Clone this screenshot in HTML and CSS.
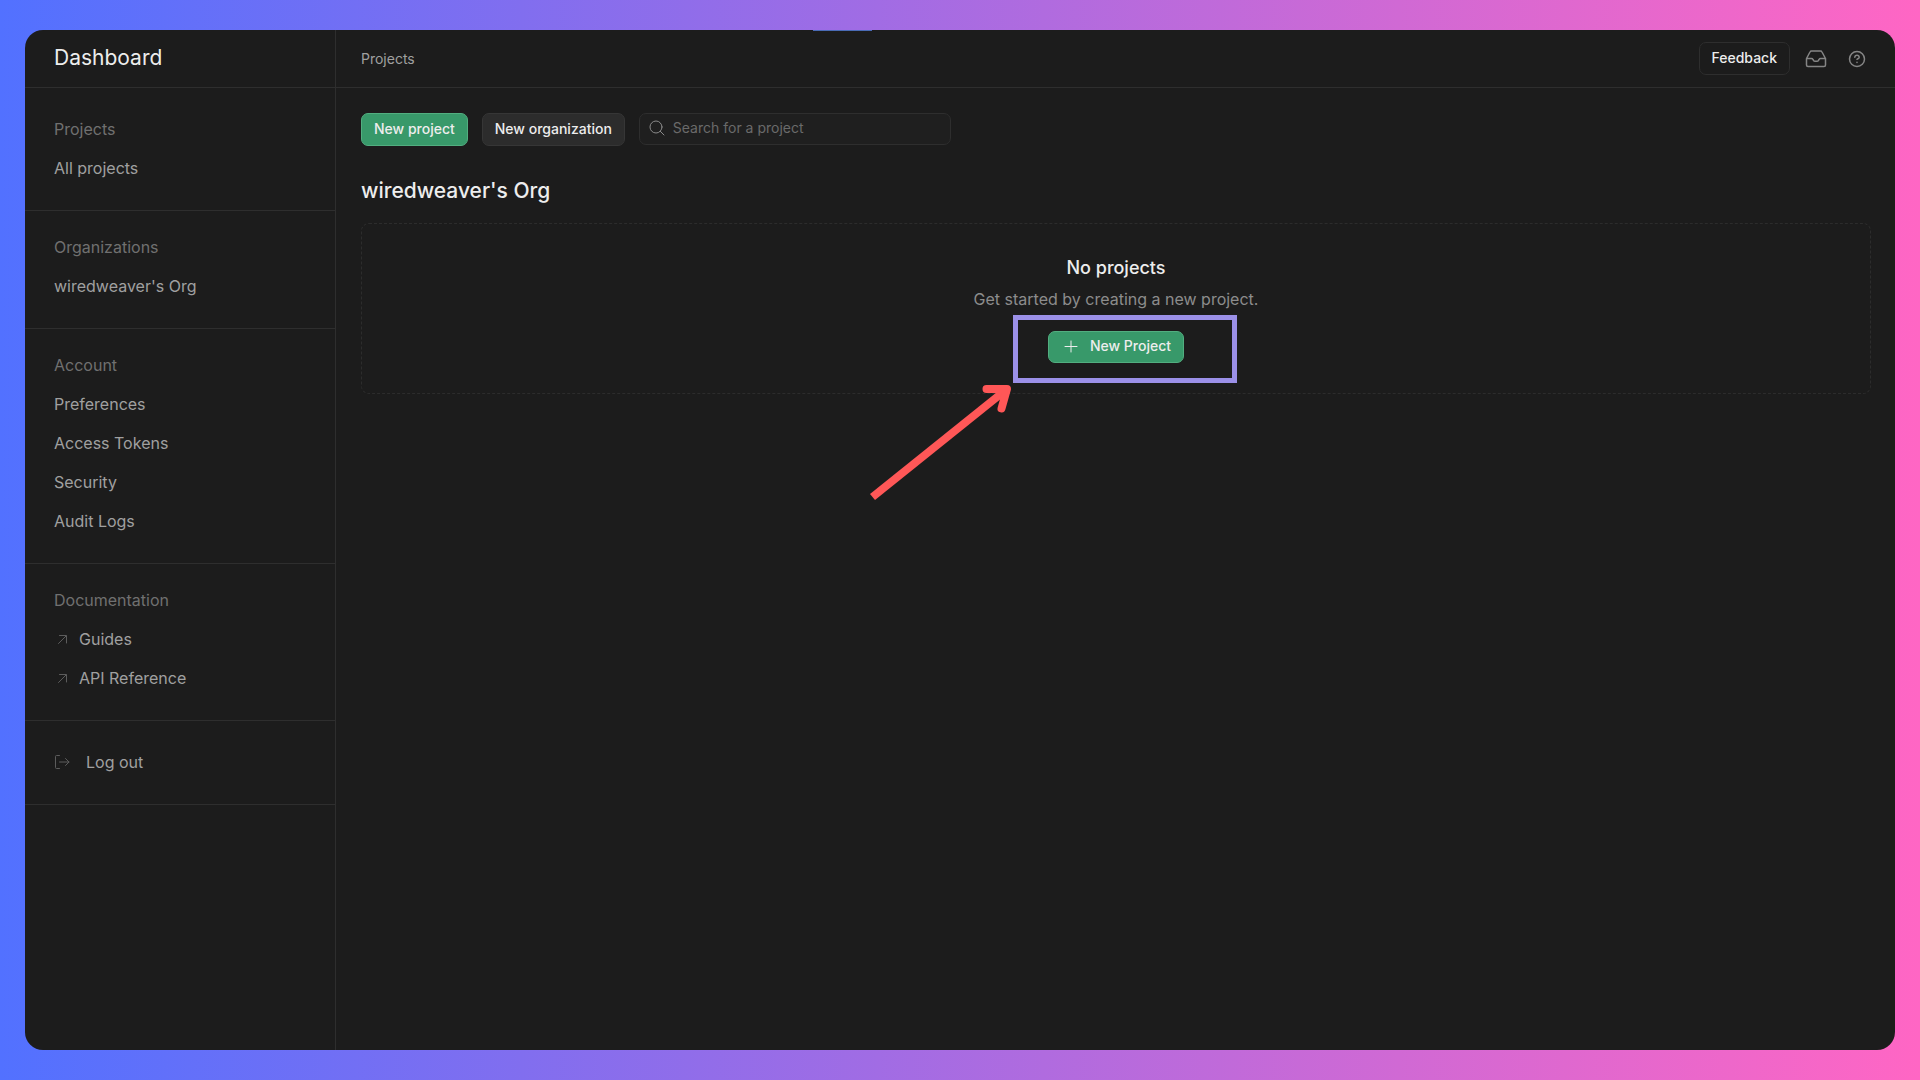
FILE: index.html
```html
<!DOCTYPE html>
<html lang="en">
<head>
<meta charset="utf-8">
<meta name="viewport" content="width=device-width, initial-scale=1">
<title>Projects | Dashboard</title>
<link rel="stylesheet" href="styles.css">
</head>
<body>
<div class="window">
  <div class="tab-accent"></div>
  <aside class="sidebar">
    <header class="bar sidebar-head"><h1 class="brand">Dashboard</h1></header>
    <nav class="nav" aria-label="Main">
      <section class="group">
        <h2 class="row group-title">Projects</h2>
        <a class="row" href="#">All projects</a>
      </section>
      <section class="group">
        <h2 class="row group-title">Organizations</h2>
        <a class="row" href="#">wiredweaver's Org</a>
      </section>
      <section class="group">
        <h2 class="row group-title">Account</h2>
        <a class="row" href="#">Preferences</a>
        <a class="row" href="#">Access Tokens</a>
        <a class="row" href="#">Security</a>
        <a class="row" href="#">Audit Logs</a>
      </section>
      <section class="group">
        <h2 class="row group-title">Documentation</h2>
        <a class="row" href="#"><svg class="icon" width="17" height="17" viewBox="0 0 17 17"><path d="M4.500 13.500 12 6M5.500 5.500H12.500V13"/></svg>Guides</a>
        <a class="row" href="#"><svg class="icon" width="17" height="17" viewBox="0 0 17 17"><path d="M4.500 13.500 12 6M5.500 5.500H12.500V13"/></svg>API Reference</a>
      </section>
      <section class="group group-exit">
        <button class="row row-exit" type="button"><svg class="icon" width="17" height="17" viewBox="0 0 17 17"><path d="M5.500 2.500H2.500Q1.500 2.500 1.500 3.500V14.500Q1.500 15.500 2.500 15.500H5.500M5.500 9H15M11.500 5.500 15 9 11.500 12.500"/></svg>Log out</button>
      </section>
    </nav>
  </aside>
  <main class="main">
    <header class="bar topbar">
      <span class="crumb">Projects</span>
      <div class="tools">
        <button class="btn btn-outline" type="button">Feedback</button>
        <button class="icon-btn" type="button" aria-label="Inbox"><svg width="22" height="20" viewBox="0 0 22 20"><path d="M1.500 9.500 5 3Q5.500 2 6.500 2H15.500Q16.500 2 17 3L20.500 9.500V16Q20.500 17.500 19 17.500H3Q1.500 17.500 1.500 16V9.500H6.500Q7.500 9.500 8 10.500L8.500 11.300Q9 12.300 10 12.300H12Q13 12.300 13.500 11.300L14 10.500Q14.500 9.500 15.500 9.500H20.500"/></svg></button>
        <button class="icon-btn" type="button" aria-label="Help"><svg width="18" height="18" viewBox="0 0 18 18"><circle cx="9" cy="9" r="7.500"/><path d="M6.800 7.200Q7 5.200 9 5.200T11.200 7.200Q11.200 8.200 10 8.700L9 9.300M9 12.300V12.600"/></svg></button>
      </div>
    </header>
    <div class="content">
      <div class="actions">
        <button class="btn btn-primary" type="button">New project</button>
        <button class="btn btn-muted" type="button">New organization</button>
        <label class="search">
          <svg width="18" height="18" viewBox="0 0 18 18"><circle cx="8" cy="8" r="6"/><path d="M12.300 12.300 16 16"/></svg>
          <input type="search" placeholder="Search for a project" aria-label="Search for a project">
        </label>
      </div>
      <h2 class="org">wiredweaver's Org</h2>
      <section class="empty">
        <h3 class="empty-title">No projects</h3>
        <p class="empty-text">Get started by creating a new project.</p>
        <div class="callout">
          <button class="btn btn-primary btn-new" type="button"><svg width="14" height="14" viewBox="0 0 14 14"><path d="M7 2V13M1 7.500H13"/></svg>New Project</button>
          <div class="highlight"></div>
          <svg class="arrow" width="146" height="122" viewBox="0 0 146 122"><path d="M4.500 117 139 9"/><path class="arrow-head" d="M118.500 9H139L133.500 28.500"/></svg>
        </div>
      </section>
    </div>
  </main>
</div>
</body>
</html>
```
FILE: styles.css
```css
* {
  box-sizing: border-box;
  margin: 0;
}

body {
  min-height: 100vh;
  padding: 30px 25px;
  display: flex;
  background: linear-gradient(90deg, #5271ff, #ff66c4);
  color: #ededed;
  font: 400 16px/20px Inter, "Liberation Sans", sans-serif;
}

button,
input {
  font: inherit;
  color: inherit;
}

button {
  cursor: pointer;
}

a {
  color: inherit;
  text-decoration: none;
}

svg {
  flex: none;
  fill: none;
  stroke: currentColor;
  stroke-linecap: round;
  stroke-linejoin: round;
}

.window {
  position: relative;
  flex: 1;
  display: flex;
  overflow: hidden;
  border-radius: 18px;
  background: #1c1c1c;
}

.tab-accent {
  position: absolute;
  top: 0;
  left: 788px;
  width: 59px;
  height: 1px;
  background: #4a6bb5;
}

.bar {
  height: 58px;
  display: flex;
  align-items: center;
  border-bottom: 1px solid #2e2e2e;
}

/* Sidebar */
.sidebar {
  flex: none;
  width: 311px;
  border-right: 1px solid #2e2e2e;
}

.sidebar-head {
  padding: 0 29px 2px;
}

.brand {
  font-size: 21px;
  font-weight: 400;
}

.nav {
  padding-top: 5px;
  color: #a0a0a0;
}

.group {
  padding: 17px 29px 22px;
  border-bottom: 1px solid #2e2e2e;
}

.group-exit {
  padding-top: 22px;
}

.row {
  height: 39px;
  display: flex;
  align-items: center;
  gap: 8px;
  padding: 0 0 2px;
}

.group-title {
  color: #707070;
  font-size: 16px;
  font-weight: 400;
}

.row-exit {
  gap: 15px;
  border: 0;
  background: none;
}

.icon {
  color: #5c5c5c;
}

/* Main column */
.main {
  flex: 1;
  min-width: 0;
}

.topbar {
  justify-content: space-between;
  padding: 0 29px 0 25px;
}

.crumb {
  color: #a0a0a0;
  font-size: 14px;
}

.tools {
  display: flex;
  align-items: center;
  gap: 15px;
}

.icon-btn {
  display: flex;
  padding: 0;
  border: 0;
  background: none;
  color: #858585;
  stroke-width: 1.5;
}

.icon-btn + .icon-btn {
  margin-left: 6px;
}

.btn {
  height: 33px;
  padding: 0 12px 2px;
  border: 1px solid;
  border-radius: 7px;
  font-size: 14px;
  font-weight: 500;
  white-space: nowrap;
}

.btn-primary {
  border-color: #52ae80;
  background: #38996a;
}

.btn-muted {
  border-color: #363636;
  background: #2c2c2c;
}

.btn-outline {
  border-color: #2e2e2e;
  background: #1c1c1c;
}

.content {
  padding: 25px 24px 24px 25px;
}

.actions {
  display: flex;
  gap: 14px;
}

.search {
  width: 312px;
  height: 32px;
  padding: 0 8px 2px;
  display: flex;
  align-items: center;
  gap: 7px;
  border: 1px solid #2e2e2e;
  border-radius: 7px;
  background: #1f1f1f;
  color: #8a8a8a;
}

.search input {
  flex: 1;
  min-width: 0;
  padding: 0;
  border: 0;
  outline: 0;
  background: none;
  font-size: 14px;
}

.search input::placeholder {
  color: #6a6a6a;
  opacity: 1;
}

.org {
  margin: 33px 0 20px;
  font-size: 21px;
  font-weight: 500;
  line-height: 24px;
}

.empty {
  padding: 34px 20px 30px;
  display: flex;
  flex-direction: column;
  align-items: center;
  border: 1px dashed #2c2c2c;
  border-radius: 8px;
}

.empty-title {
  font-size: 18px;
  font-weight: 500;
}

.empty-text {
  margin: 11px 0 22px;
  color: #8c8c8c;
}

.callout {
  position: relative;
}

.btn-new {
  height: 32px;
  display: flex;
  align-items: center;
  gap: 12px;
  padding-left: 15px;
}

/* Tutorial markings over the empty state */
.highlight {
  position: absolute;
  inset: -16px -53px -20px -35px;
  border: 5px solid #9b90e8;
  pointer-events: none;
}

.arrow {
  position: absolute;
  top: 49px;
  left: -180px;
  color: #ff5757;
  stroke-width: 8;
  stroke-linecap: butt;
  pointer-events: none;
}

.arrow-head {
  stroke-linecap: round;
}
```
